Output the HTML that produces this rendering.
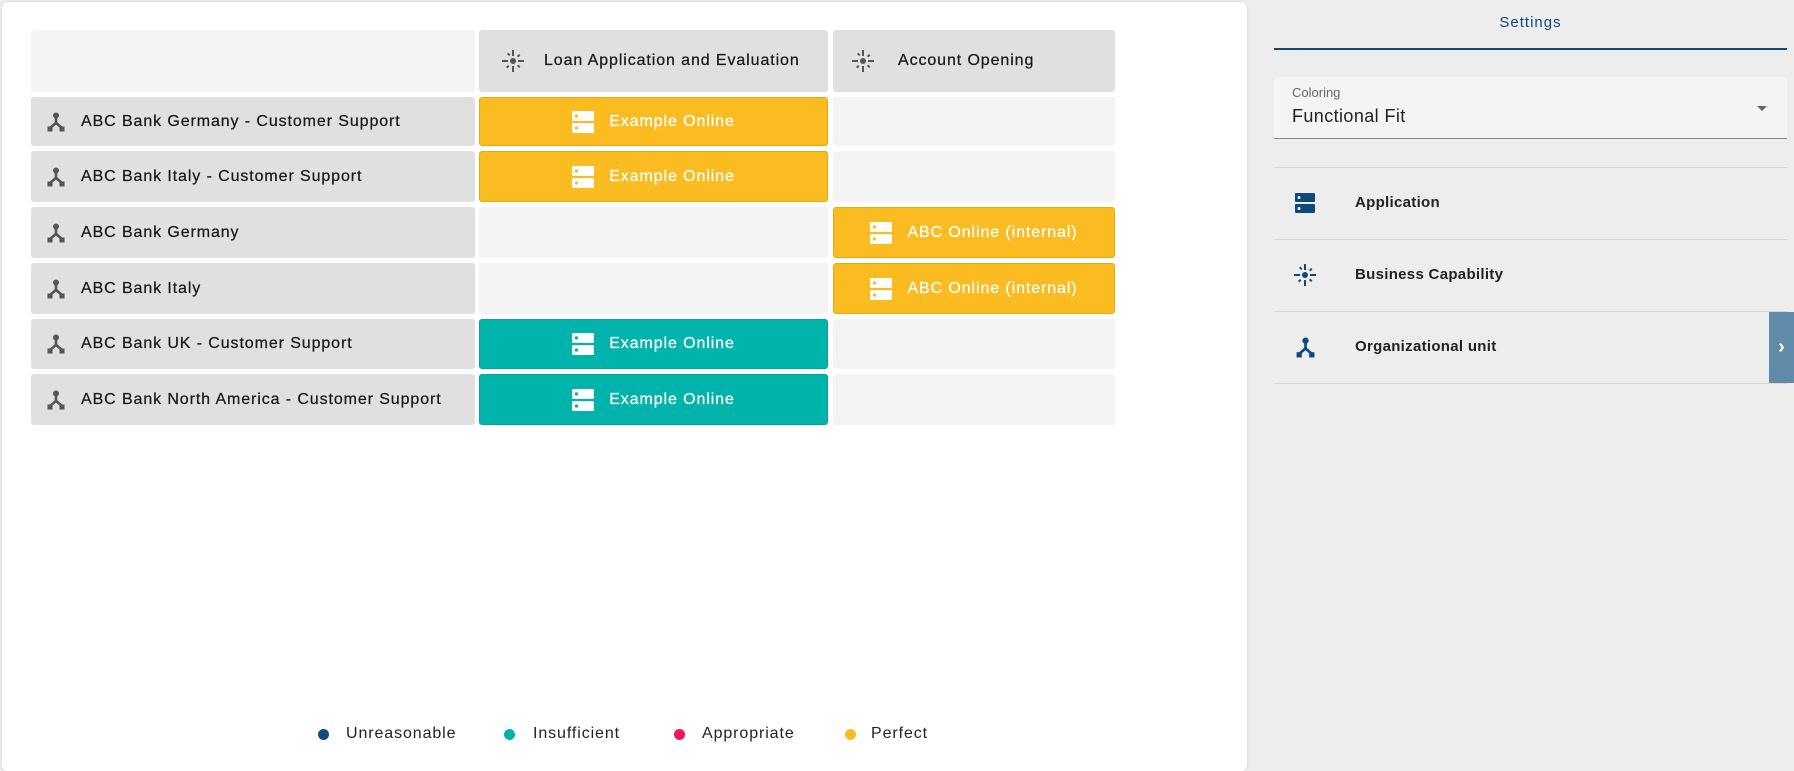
<!DOCTYPE html>
<html><head><meta charset="utf-8"><style>
*{box-sizing:border-box;margin:0;padding:0}
body{width:1794px;height:771px;background:#ededed;font-family:"Liberation Sans",sans-serif;position:relative;overflow:hidden}
.card{position:absolute;left:2px;top:2px;width:1245px;height:769px;background:#fff;border-radius:6px;box-shadow:0 0 2px rgba(0,0,0,.15)}
.c{position:absolute;border-radius:3px;display:flex;align-items:center;font-size:16px;letter-spacing:.9px;color:#1a1a1a;-webkit-text-stroke:.25px currentColor}
.g{background:#e0e0e0}.l{background:#f4f4f4}
.y{background:#fbbc22;border:1px solid #e8a910;color:#fff;justify-content:center}
.t{background:#00b4ab;border:1px solid #00a49b;color:#fff;justify-content:center}
.c svg{flex:none}
.lg{position:absolute;top:725px;font-size:16px;letter-spacing:.9px;color:#222}
.dot{position:absolute;top:729px;width:11px;height:11px;border-radius:50%}
.rp{position:absolute;font-size:15px;color:#222}
.hr{position:absolute;left:1274px;width:513px;height:1px;background:#d6d6d6}
</style></head><body>
<div class="card"></div>
<svg width="0" height="0" style="position:absolute"><defs>
<symbol id="org" viewBox="0 0 20 20"><circle cx="10" cy="3.5" r="3"/><path d="M8.7 5h2.6v5.3l5.2 4.5-1.7 1.9L10 12.6l-4.8 4.1-1.7-1.9 5.2-4.5z"/><rect x="1.5" y="14.5" width="5" height="5"/><rect x="13.5" y="14.5" width="5" height="5"/></symbol>
<symbol id="app" viewBox="0 0 20 20"><path fill-rule="evenodd" d="M1 0h18a1 1 0 0 1 1 1v7a1 1 0 0 1-1 1H1a1 1 0 0 1-1-1V1a1 1 0 0 1 1-1zM4 3a1.5 1.5 0 1 0 0 3a1.5 1.5 0 1 0 0-3zM1 11h18a1 1 0 0 1 1 1v7a1 1 0 0 1-1 1H1a1 1 0 0 1-1-1v-7a1 1 0 0 1 1-1zM4 14a1.5 1.5 0 1 0 0 3a1.5 1.5 0 1 0 0-3z"/></symbol>
<symbol id="cap" viewBox="0 0 24 24"><circle cx="12" cy="12" r="3"/><path d="M11 1h2v6h-2zM11 17h2v6h-2zM1 11h6v2H1zM17 11h6v2h-6zM6 5l1.4-1.4 2 2L8 7zM16 17l1.4-1.4 2 2L18 19zM5 18l2-2 1.4 1.4-2 2zM16 7l2-2 1.4 1.4-2 2z"/></symbol>
</defs></svg>

<div class="c l" style="left:31px;top:30px;width:444px;height:62px"></div>
<div class="c g" style="left:479px;top:30px;width:349px;height:62px;padding-left:22px"><svg width="24" height="24" fill="#555"><use href="#cap"/></svg><span style="margin-left:19px">Loan Application and Evaluation</span></div>
<div class="c g" style="left:833px;top:30px;width:282px;height:62px;padding-left:18px"><svg width="24" height="24" fill="#555"><use href="#cap"/></svg><span style="margin-left:23px">Account Opening</span></div>

<div class="c g" style="left:31px;top:97px;width:444px;height:49px;padding-left:15px"><svg width="20" height="20" fill="#555"><use href="#org"/></svg><span style="margin-left:15px">ABC Bank Germany - Customer Support</span></div>
<div class="c y" style="left:479px;top:97px;width:349px;height:49px"><svg width="22" height="22" fill="#fff"><use href="#app"/></svg><span style="margin-left:15px">Example Online</span></div>
<div class="c l" style="left:833px;top:97px;width:282px;height:49px"></div>

<div class="c g" style="left:31px;top:151px;width:444px;height:51px;padding-left:15px"><svg width="20" height="20" fill="#555"><use href="#org"/></svg><span style="margin-left:15px">ABC Bank Italy - Customer Support</span></div>
<div class="c y" style="left:479px;top:151px;width:349px;height:51px"><svg width="22" height="22" fill="#fff"><use href="#app"/></svg><span style="margin-left:15px">Example Online</span></div>
<div class="c l" style="left:833px;top:151px;width:282px;height:51px"></div>

<div class="c g" style="left:31px;top:207px;width:444px;height:51px;padding-left:15px"><svg width="20" height="20" fill="#555"><use href="#org"/></svg><span style="margin-left:15px">ABC Bank Germany</span></div>
<div class="c l" style="left:479px;top:207px;width:349px;height:51px"></div>
<div class="c y" style="left:833px;top:207px;width:282px;height:51px"><svg width="22" height="22" fill="#fff"><use href="#app"/></svg><span style="margin-left:15px">ABC Online (internal)</span></div>

<div class="c g" style="left:31px;top:263px;width:444px;height:51px;padding-left:15px"><svg width="20" height="20" fill="#555"><use href="#org"/></svg><span style="margin-left:15px">ABC Bank Italy</span></div>
<div class="c l" style="left:479px;top:263px;width:349px;height:51px"></div>
<div class="c y" style="left:833px;top:263px;width:282px;height:51px"><svg width="22" height="22" fill="#fff"><use href="#app"/></svg><span style="margin-left:15px">ABC Online (internal)</span></div>

<div class="c g" style="left:31px;top:319px;width:444px;height:50px;padding-left:15px"><svg width="20" height="20" fill="#555"><use href="#org"/></svg><span style="margin-left:15px">ABC Bank UK - Customer Support</span></div>
<div class="c t" style="left:479px;top:319px;width:349px;height:50px"><svg width="22" height="22" fill="#fff"><use href="#app"/></svg><span style="margin-left:15px">Example Online</span></div>
<div class="c l" style="left:833px;top:319px;width:282px;height:50px"></div>

<div class="c g" style="left:31px;top:374px;width:444px;height:51px;padding-left:15px"><svg width="20" height="20" fill="#555"><use href="#org"/></svg><span style="margin-left:15px">ABC Bank North America - Customer Support</span></div>
<div class="c t" style="left:479px;top:374px;width:349px;height:51px"><svg width="22" height="22" fill="#fff"><use href="#app"/></svg><span style="margin-left:15px">Example Online</span></div>
<div class="c l" style="left:833px;top:374px;width:282px;height:51px"></div>

<div class="dot" style="left:318px;background:#154a7e"></div><div class="lg" style="left:346px">Unreasonable</div>
<div class="dot" style="left:504px;background:#00b4ab"></div><div class="lg" style="left:533px">Insufficient</div>
<div class="dot" style="left:674px;background:#f0145a"></div><div class="lg" style="left:702px">Appropriate</div>
<div class="dot" style="left:845px;background:#fbbc22"></div><div class="lg" style="left:871px">Perfect</div>

<div class="rp" style="left:1274px;width:513px;top:14px;text-align:center;color:#0d4a7a;letter-spacing:1px">Settings</div>
<div style="position:absolute;left:1274px;top:48px;width:513px;height:2px;background:#0d4a7a"></div>
<div style="position:absolute;left:1274px;top:77px;width:513px;height:62px;background:#f4f4f4;border-bottom:1px solid #8a8a8a;border-radius:4px 4px 0 0"></div>
<div class="rp" style="left:1292px;top:85px;font-size:13px;color:#666">Coloring</div>
<div class="rp" style="left:1292px;top:106px;font-size:18px;letter-spacing:.4px">Functional Fit</div>
<div style="position:absolute;left:1757px;top:106px;border-left:5px solid transparent;border-right:5px solid transparent;border-top:5px solid #666"></div>
<div class="hr" style="top:167px"></div>
<svg style="position:absolute;left:1295px;top:193px" width="20" height="20" fill="#0d4a7a"><use href="#app"/></svg>
<div class="rp" style="left:1355px;top:194px;font-weight:bold;letter-spacing:.3px">Application</div>
<div class="hr" style="top:239px"></div>
<svg style="position:absolute;left:1293px;top:263px" width="24" height="24" fill="#0d4a7a"><use href="#cap"/></svg>
<div class="rp" style="left:1355px;top:266px;font-weight:bold;letter-spacing:.3px">Business Capability</div>
<div class="hr" style="top:311px"></div>
<svg style="position:absolute;left:1295px;top:337px" width="21" height="21" fill="#0d4a7a"><use href="#org"/></svg>
<div class="rp" style="left:1355px;top:338px;font-weight:bold;letter-spacing:.3px">Organizational unit</div>
<div class="hr" style="top:383px"></div>
<div style="position:absolute;left:1769px;top:312px;width:25px;height:71px;background:#5f8aa8;color:#fff;font-size:20px;font-weight:bold;display:flex;align-items:center;justify-content:center">›</div>
</body></html>
